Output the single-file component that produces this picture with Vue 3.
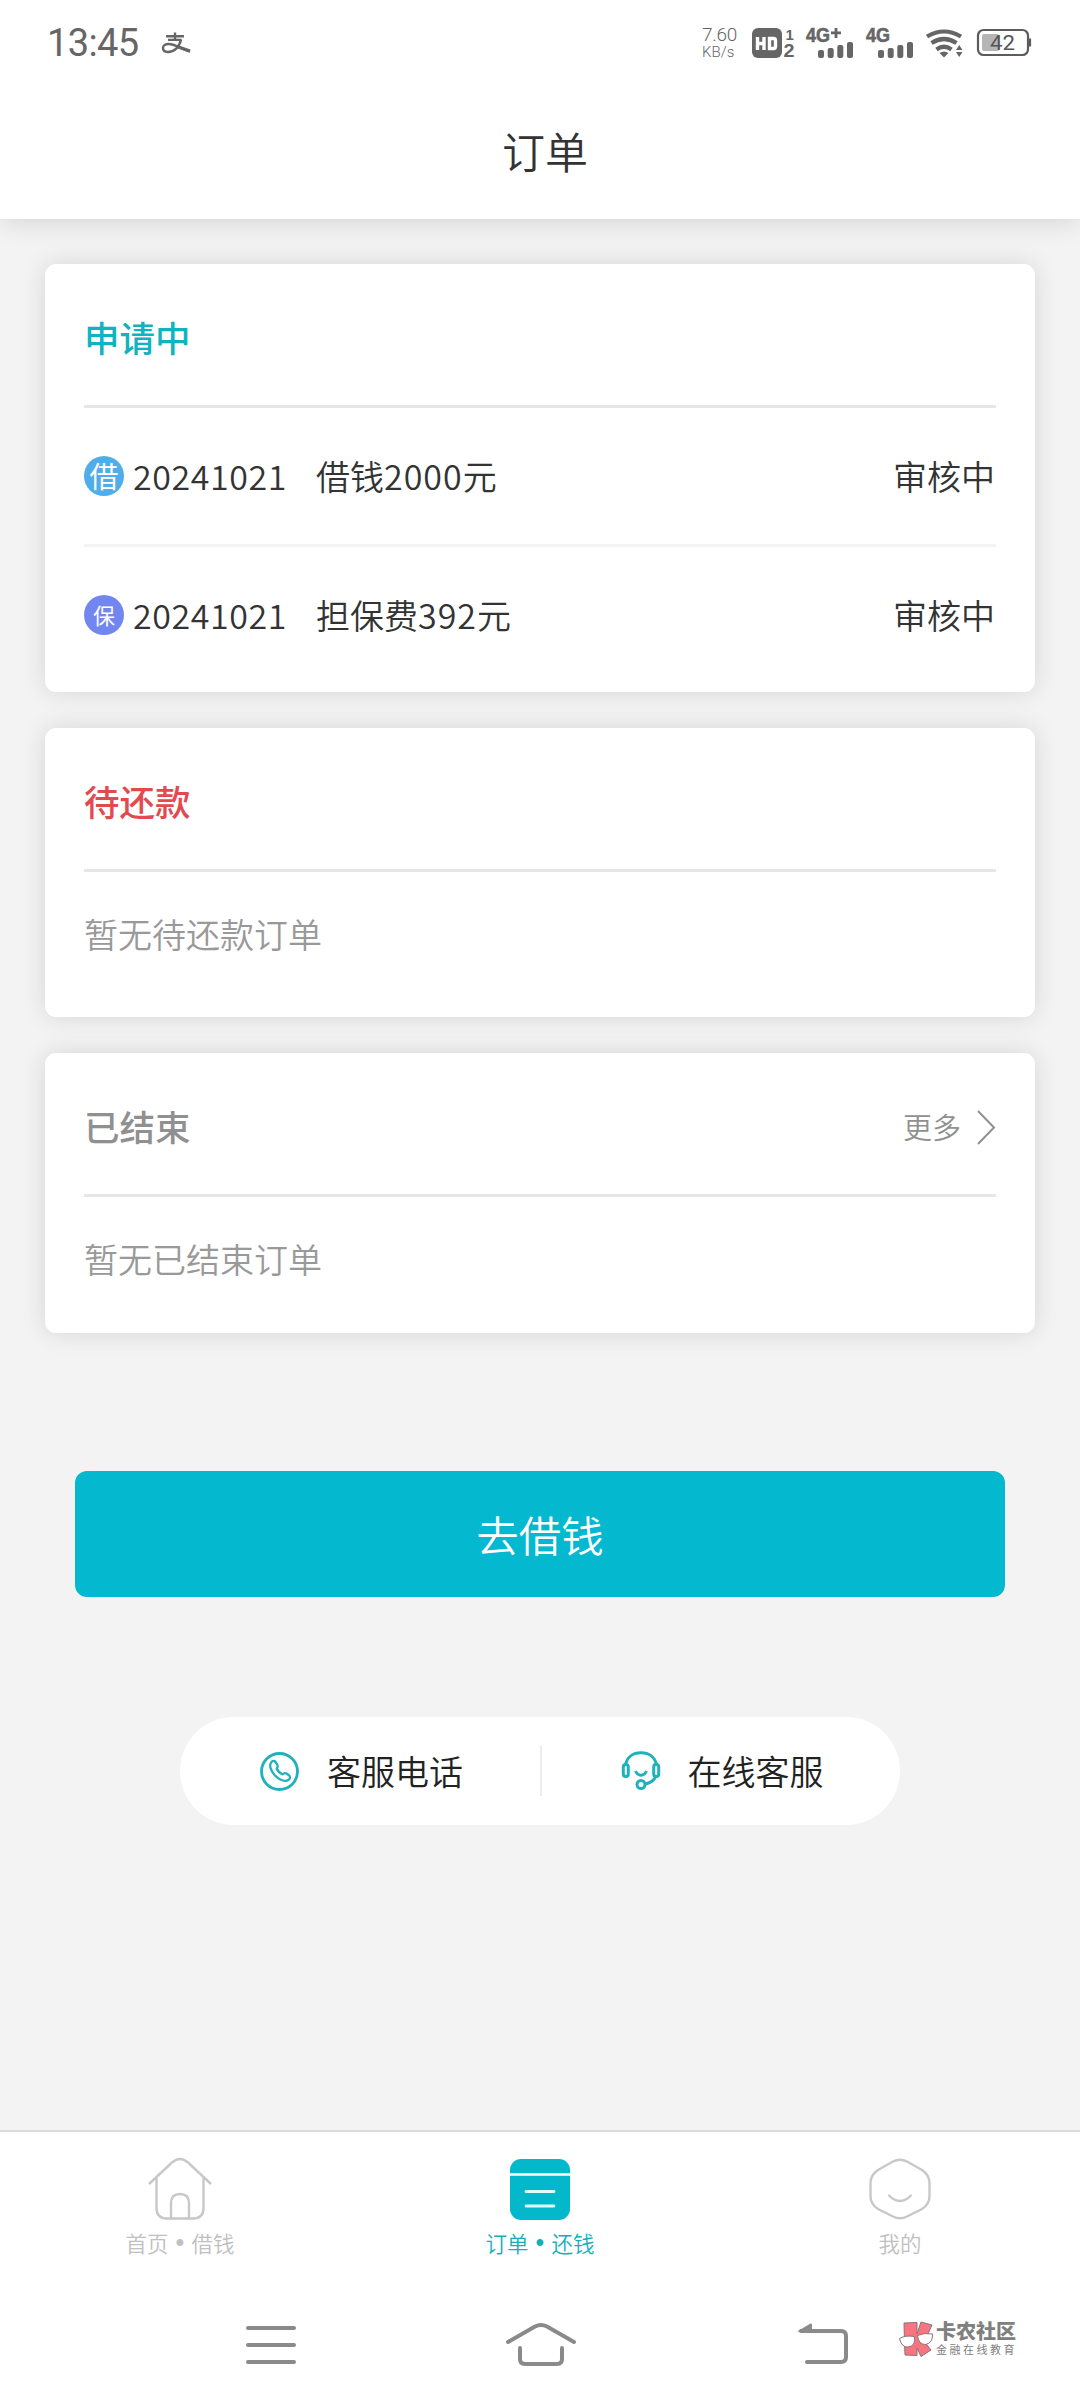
<script setup>
const loans = [
  { badge: '借', kind: 'loan', date: '20241021', pre: '借钱', num: '2000', state: '审核中' },
  { badge: '保', kind: 'fee', date: '20241021', pre: '担保费', num: '392', state: '审核中' },
]
const bars = [
  { x: 0, h: 8 },
  { x: 9.7, h: 10 },
  { x: 19.3, h: 13 },
  { x: 29, h: 16 },
]
</script>

<template>
  <div class="page">
    <header class="top">
      <div class="status">
        <span class="time">13:45</span>
        <svg class="pay" viewBox="162 31 29 22" width="29" height="22" fill="none" stroke="#666">
          <path d="M166 35.2H184M168 38.9H181.500M175 31.500V38.500" stroke-width="2.4" />
          <path d="M181 38.500C179.500 46 174 51 168 51C164.500 51 163 49 163 47C163 44.500 165.500 43 168.500 43C175 43 180 47.500 190 50.500" stroke-width="2.4" />
          <path d="M177 45.500L190 50" stroke-width="3.2" />
        </svg>
        <span class="grow"></span>
        <div class="speed"><span class="s1">7.60</span><span class="s2">KB/s</span></div>
        <svg class="hd" viewBox="753 27 43 30" width="43" height="30">
          <rect x="753" y="27" width="30" height="30" rx="6" fill="#666" />
          <path d="M758.500 36V49M765 36V49M758.500 42.500H765M770.500 37.500V47.500H774.500Q776.500 47.500 776.500 45.500V39.500Q776.500 37.500 774.500 37.500Z" fill="none" stroke="#fff" stroke-width="3.4" />
          <text x="786.500" y="38.500" class="sim" font-size="15">1</text>
          <text x="784.500" y="56" class="sim" font-size="18" textLength="11" lengthAdjust="spacingAndGlyphs">2</text>
        </svg>
        <svg class="sig1" viewBox="807 26 48 32" width="48" height="32">
          <text x="807" y="41" class="net" textLength="24" lengthAdjust="spacingAndGlyphs">4G</text>
          <path d="M832 31.800H842M837 27V37" stroke="#666" stroke-width="2.8" />
          <rect v-for="b in bars" :key="b.x" :x="819 + b.x" :y="57 - b.h" width="6" :height="b.h" rx="2" fill="#666" />
        </svg>
        <svg class="sig2" viewBox="867 26 48 32" width="48" height="32">
          <text x="867" y="41" class="net" textLength="24" lengthAdjust="spacingAndGlyphs">4G</text>
          <rect v-for="b in bars" :key="b.x" :x="879 + b.x" :y="57 - b.h" width="6" :height="b.h" rx="2" fill="#666" />
        </svg>
        <svg class="wifi" viewBox="927 27 37 30" width="37" height="30" fill="none" stroke="#666" stroke-width="4.2">
          <path d="M928 35.500Q945 25.500 962 35.500M932.500 42Q945 34 957.500 42M937.500 48.500Q945 43 952.500 48.500" />
          <path d="M940.500 52Q945 49 949.500 52L945 56.500Z" fill="#666" stroke="none" />
          <path d="M957 49L960.200 44L963.500 49ZM957 51L960.200 56L963.500 51Z" fill="#666" stroke="none" />
        </svg>
        <svg class="battery" viewBox="978 30 55 28" width="55" height="28">
          <rect x="979" y="31" width="50" height="25" rx="5.500" fill="none" stroke="#5c5c5c" stroke-width="2.200" />
          <rect x="983" y="35" width="17" height="17" rx="2" fill="#b5b5b5" />
          <path d="M1031 39.500V47.500" stroke="#5c5c5c" stroke-width="2.200" />
          <text x="991" y="51" class="pct" textLength="25" lengthAdjust="spacingAndGlyphs">42</text>
        </svg>
      </div>
      <h1>订单</h1>
    </header>

    <main class="body">
      <section class="card first">
        <div class="head"><h2 class="teal">申请中</h2></div>
        <div v-for="l in loans" :key="l.badge" class="row">
          <span class="badge" :class="l.kind">{{ l.badge }}</span>
          <span class="date">{{ l.date }}</span>
          <span class="name">{{ l.pre }}<span class="num">{{ l.num }}</span>元</span>
          <span class="state">{{ l.state }}</span>
        </div>
      </section>

      <section class="card second">
        <div class="head"><h2 class="red">待还款</h2></div>
        <p class="empty">暂无待还款订单</p>
      </section>

      <section class="card third">
        <div class="head">
          <h2 class="gray">已结束</h2>
          <span class="more">更多</span>
          <svg viewBox="0 0 19 35" width="19" height="35" fill="none" stroke="#909090" stroke-width="2"><path d="M1 1L17 17.500L1 34" /></svg>
        </div>
        <p class="empty">暂无已结束订单</p>
      </section>

      <button class="borrow">去借钱</button>

      <div class="support">
        <div class="cell">
          <svg viewBox="0 0 40 40" width="40" height="40" fill="none" stroke="#1fb2bd" stroke-width="2.800">
            <circle cx="19.500" cy="20.500" r="18" />
            <path d="M11.500 11C9 13.500 10 19 15 24.500C20.500 30 26 31 28.800 28.600C30.500 27 30.500 25.500 29 24.300L26.500 22.500C25 21.500 24 22 22.500 23.300C20.500 22.500 17.500 19.500 16.700 17.500C18 16 18 15 17.200 13.500L15.500 11C14.300 9.500 12.800 9.700 11.500 11Z" stroke-width="2.300" stroke-linejoin="round" />
          </svg>
          <span>客服电话</span>
        </div>
        <i class="split"></i>
        <div class="cell right">
          <svg viewBox="0 0 40 40" width="40" height="40" fill="none" stroke="#1fb2bd" stroke-width="3">
            <path d="M4.500 14C6 6 12 1.800 20 1.800S34 6 35.500 14" />
            <rect x="2.300" y="13.500" width="5" height="12" rx="2.400" />
            <rect x="32.700" y="13.500" width="5" height="12" rx="2.400" />
            <path d="M14.500 20C17 25.500 23 25.500 25.500 20M35 25C33 30 29 32 24 33" />
            <circle cx="20" cy="33.500" r="4" />
          </svg>
          <span>在线客服</span>
        </div>
      </div>
    </main>

    <nav class="tabs">
      <div class="tab">
        <svg viewBox="0 0 66 66" width="66" height="66" fill="none" stroke="#c8c8c8" stroke-width="2.400">
          <path d="M2 29L25 7.500Q33 0.500 41 7.500L64 29M9.500 22V53Q9.500 63.500 20 63.500H46Q56.500 63.500 56.500 53V22M24 63.500V48Q24 39 33 39T42 48V63.500" />
        </svg>
        <div class="lab">首页<b>•</b>借钱</div>
      </div>
      <div class="tab on">
        <svg viewBox="0 0 66 66" width="66" height="66">
          <rect x="3" y="4" width="60" height="61" rx="11" fill="#04b8cc" />
          <path d="M3 19.500H63" stroke="#fff" stroke-width="2.600" />
          <path d="M19 36.500H47M19 51H47" stroke="#e2ffff" stroke-width="2.800" stroke-linecap="round" />
        </svg>
        <div class="lab">订单<b>•</b>还钱</div>
      </div>
      <div class="tab">
        <svg viewBox="0 0 66 66" width="66" height="66" fill="none" stroke="#c8c8c8" stroke-width="2.400">
          <path d="M26 6.500Q33 3 40 6.500L55 15Q62.500 20 62.500 28V41Q62.500 49 55 54L40 61.500Q33 65 26 61.500L11 54Q3.500 49 3.500 41V28Q3.500 20 11 15Z" />
          <path d="M22 40.500Q33 51.500 44 40.500" stroke-linecap="round" />
        </svg>
        <div class="lab">我的</div>
      </div>
    </nav>

    <footer class="sysnav">
      <svg class="menu" viewBox="246 2320 50 50" width="50" height="50" stroke="#8a8a8a" stroke-width="4" stroke-linecap="round">
        <path d="M248 2328H294M248 2345H294M248 2362H294" />
      </svg>
      <svg class="home" viewBox="504 2320 74 50" width="74" height="50" fill="none" stroke="#8a8a8a" stroke-width="4" stroke-linecap="round">
        <path d="M508 2342L535 2326.500Q541 2323.500 547 2326.500L574 2342M520 2348V2359Q520 2364 525 2364H557Q562 2364 562 2359V2348" />
      </svg>
      <svg class="back" viewBox="797 2320 54 50" width="54" height="50" fill="none" stroke="#8a8a8a" stroke-width="4" stroke-linecap="round">
        <path d="M802 2331H842Q847 2331 847 2336V2357Q847 2362 842 2362H808" />
        <path d="M798 2331.500L811.500 2323.500Q813 2323 813 2325V2332.500Z" fill="#8a8a8a" stroke="none" />
      </svg>
      <svg class="klogo" viewBox="899 2319 36 38" width="36" height="38" stroke="#8a7478" stroke-width="1" stroke-linejoin="round">
        <path d="M905 2322L918 2321.500V2333L922 2321L933 2324L928 2335L924 2339L932 2349L922 2355.500L918 2347V2354.500L906 2354L905.500 2342Z" fill="#f77480" />
        <path d="M900.500 2337.500Q906 2334 915.500 2335.500Q917 2345 909 2346Q902.500 2346.500 900.500 2337.500ZM918.500 2334.500Q925 2331.500 933.500 2333Q934 2342 926.500 2343.500Q919.500 2343.500 918.500 2334.500Z" fill="#fff" />
      </svg>
      <div class="mark"><strong>卡农社区</strong><small>金融在线教育</small></div>
    </footer>
  </div>
</template>

<style>
body { margin: 0; background: #f3f3f3; }
</style>

<style scoped>
* { box-sizing: border-box; }
.page {
  width: 1080px; height: 2408px; display: flex; flex-direction: column;
  background: #f3f3f3; color: #333; overflow: hidden;
  font-family: "Noto Sans CJK SC", sans-serif; font-weight: 350;
}
h1, h2, p { margin: 0; font-weight: 350; }
svg { display: block; flex: none; overflow: visible; }
.top { height: 219px; background: #fff; box-shadow: 0 0 28px rgba(0, 0, 0, .15); }
.status { height: 86px; padding: 0 48px 0 47px; display: flex; align-items: center; color: #666; }
.time { font-family: Roboto, sans-serif; font-size: 38px; line-height: 45px; font-weight: 400; width: 115px; letter-spacing: -.6px; }
.grow { flex: 1; }
.speed { display: flex; flex-direction: column; width: 50px; font-family: Roboto, sans-serif; font-weight: 300; padding-top: 1px; }
.s1 { font-size: 19px; line-height: 18px; letter-spacing: -.3px; }
.s2 { font-size: 15px; line-height: 17px; }
.hd { margin-right: 11px; }
.sig1, .sig2 { margin-right: 12px; }
.wifi { margin-right: 14px; }
.sim, .net { font-family: "Liberation Sans", sans-serif; font-weight: 700; fill: #666; }
.net { font-size: 20px; stroke: #666; stroke-width: .6px; }
.pct { font-family: Roboto, sans-serif; font-size: 21px; fill: #555; font-weight: 400; }
h1 { text-align: center; font-size: 43px; line-height: 60px; padding: 34px 0 0 10px; }
.body { flex: 1; padding: 45px 45px 0; display: flex; flex-direction: column; }
.card { background: #fff; border-radius: 11px; padding: 0 39px; margin-bottom: 36px; box-shadow: 0 0 24px rgba(0, 0, 0, .12); }
.first { height: 428px; }
.second { height: 289px; }
.third { height: 280px; margin-bottom: 138px; }
.head { height: 144px; border-bottom: 3px solid #e6e6e6; display: flex; align-items: center; padding-top: 7px; }
h2 { flex: 1; font-size: 35.500px; font-weight: 500; line-height: 50px; padding-bottom: 2px; }
.teal { color: #10b3c0; }
.red { color: #e34a50; }
.gray { color: #909090; }
.more { font-size: 29px; color: #909090; margin-right: 16px; padding-bottom: 2px; }
.row { height: 139px; border-bottom: 3px solid #f4f4f4; display: flex; align-items: center; font-size: 34px; line-height: 50px; }
.row:last-child { height: 136px; border-bottom: 0; }
.badge { width: 40px; height: 40px; border-radius: 50%; color: #fff; text-align: center; line-height: 39px; font-size: 29px; margin-right: 9px; font-weight: 400; }
.loan { background: #4fadea; }
.fee { background: #7286f0; font-size: 22px; }
.date { width: 183px; letter-spacing: .6px; }
.name { flex: 1; }
.num { letter-spacing: 1px; }
.state { margin-right: 1px; }
.empty { font-size: 34px; line-height: 50px; color: #999; padding-top: 37px; }
.borrow { flex: none; width: 930px; height: 126px; align-self: center; border: 0; border-radius: 12px; background: #04b8cf; color: #fff; font: 350 42.500px/126px "Noto Sans CJK SC", sans-serif; padding: 0 0 4px; }
.support { flex: none; width: 720px; height: 108px; align-self: center; margin-top: 120px; border-radius: 54px; background: #fff; color: #222; display: flex; align-items: center; font-size: 34px; line-height: 50px; }
.cell { flex: 1; display: flex; align-items: center; padding-left: 80px; gap: 27px; }
.right { padding-left: 79px; }
.split { width: 2px; height: 50px; background: #ececec; }
.tabs { height: 138px; border-top: 2px solid #dcdcdc; background: #fff; display: flex; }
.tab { flex: 1; display: flex; flex-direction: column; align-items: center; padding-top: 23px; color: #c0c0c0; }
.on { color: #16aebb; }
.lab { font-size: 21.500px; line-height: 32px; margin-top: 6px; display: flex; }
.lab b { width: 23px; display: flex; justify-content: center; font: 400 25px/31px "Liberation Sans", sans-serif; }
.sysnav { height: 140px; background: #fff; display: flex; align-items: flex-start; padding: 52px 0 0 246px; }
.home { margin-left: 208px; }
.back { margin-left: 218px; }
.klogo { margin-left: 48px; }
.mark { display: flex; flex-direction: column; margin-left: 2px; color: #808080; }
.mark strong { font-size: 20px; line-height: 22px; font-weight: 900; }
.mark small { font-size: 11px; line-height: 14px; letter-spacing: 2.500px; font-weight: 400; }
</style>
